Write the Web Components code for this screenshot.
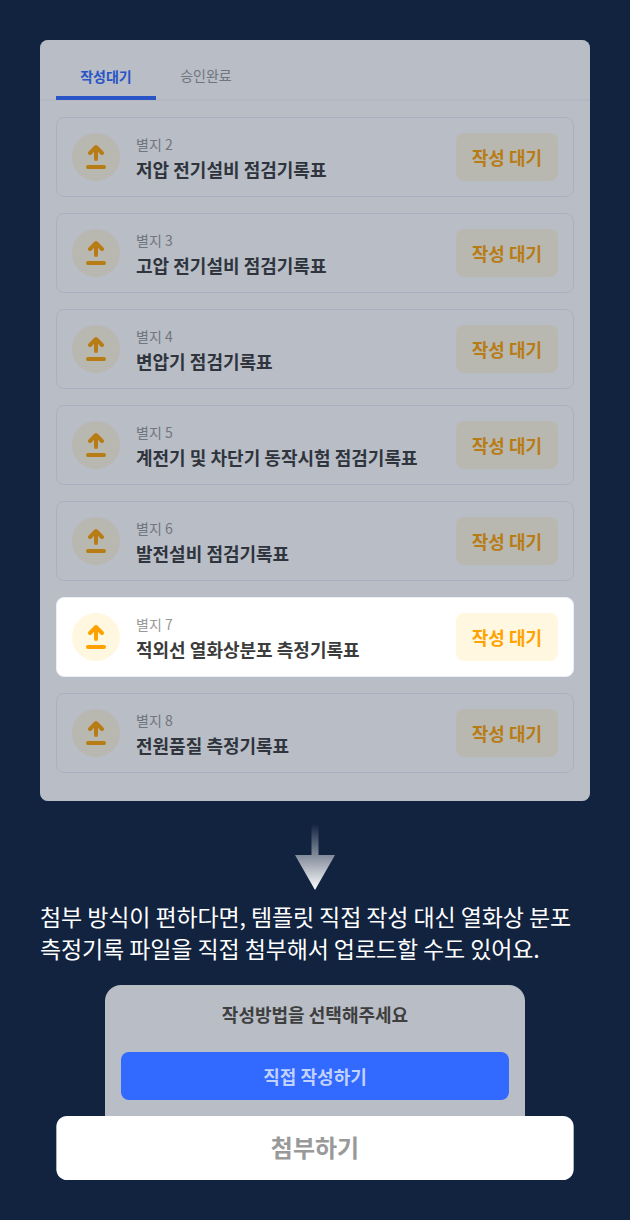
<!DOCTYPE html>
<html lang="ko">
<head>
<meta charset="utf-8">
<title>점검기록표</title>
<style>
  body {
    margin: 0;
    background: #122340;
    font-family: "Noto Sans CJK KR", "Noto Sans CJK JP", sans-serif;
  }
</style>
</head>
<body>
<guide-page>
  <list-panel>
    <tab-bar slot="tabs">
      <tab-item active>작성대기</tab-item>
      <tab-item>승인완료</tab-item>
    </tab-bar>
    <form-card no="별지 2">저압 전기설비 점검기록표</form-card>
    <form-card no="별지 3">고압 전기설비 점검기록표</form-card>
    <form-card no="별지 4">변압기 점검기록표</form-card>
    <form-card no="별지 5">계전기 및 차단기 동작시험 점검기록표</form-card>
    <form-card no="별지 6">발전설비 점검기록표</form-card>
    <form-card no="별지 7" active>적외선 열화상분포 측정기록표</form-card>
    <form-card no="별지 8">전원품질 측정기록표</form-card>
  </list-panel>
  <down-arrow></down-arrow>
  <guide-text>첨부 방식이 편하다면, 템플릿 직접 작성 대신 열화상 분포<br>측정기록 파일을 직접 첨부해서 업로드할 수도 있어요.</guide-text>
  <method-sheet>
    작성방법을 선택해주세요
    <span slot="action">직접 작성하기</span>
  </method-sheet>
  <attach-button>첨부하기</attach-button>
</guide-page>

<script>
const define = (name, html) => {
  customElements.define(name, class extends HTMLElement {
    constructor() {
      super();
      this.attachShadow({ mode: "open" });
      this.shadowRoot.innerHTML = html;
    }
  });
};

define("guide-page", `
<style>
  :host {
    display: flex;
    flex-direction: column;
    box-sizing: border-box;
    width: 630px;
    height: 1220px;
    padding: 40px;
  }
</style>
<slot></slot>
`);

define("list-panel", `
<style>
  :host {
    display: block;
    position: relative;
    isolation: isolate;
    box-sizing: border-box;
    height: 761px;
    flex: none;
    border-radius: 8px;
    background: #fff;
    overflow: hidden;
  }
  .list {
    display: flex;
    flex-direction: column;
    gap: 16px;
    padding: 16px;
  }
  /* dims everything but the active card */
  .dim {
    position: absolute;
    inset: 0;
    z-index: 1;
    background: rgb(21, 37, 67);
    opacity: 0.3;
  }
</style>
<slot name="tabs"></slot>
<div class="list"><slot></slot></div>
<div class="dim"></div>
`);

define("tab-bar", `
<style>
  :host {
    display: flex;
    box-sizing: border-box;
    height: 61px;
    padding: 0 16px;
    background: linear-gradient(#f8f8f9, #f8f8f9) left bottom / 100% 2px no-repeat;
  }
</style>
<slot></slot>
`);

define("tab-item", `
<style>
  :host {
    display: flex;
    justify-content: center;
    box-sizing: border-box;
    width: 100px;
    height: 60px;
    padding-top: 25px;
    color: #999;
    font-size: 14px;
    line-height: 20px;
  }
  :host([active]) {
    padding-top: 26px;
    border-bottom: 4px solid #3269ff;
    color: #3269ff;
    font-weight: 700;
  }
</style>
<slot></slot>
`);

define("upload-icon", `
<style>
  :host {
    display: flex;
    flex: none;
    width: 48px;
    height: 48px;
    border-radius: 50%;
    background: #fff7e0;
  }
</style>
<svg width="48" height="48" viewBox="0 0 48 48" fill="none" stroke="#ffa200" stroke-width="4" stroke-linecap="round" stroke-linejoin="round">
  <path d="M24 26V14M18 20L24 14L30 20M16 34H32"/>
</svg>
`);

customElements.define("form-card", class extends HTMLElement {
  constructor() {
    super();
    this.attachShadow({ mode: "open" });
    this.shadowRoot.innerHTML = `
<style>
  :host {
    display: flex;
    align-items: center;
    box-sizing: border-box;
    height: 80px;
    padding: 0 15px;
    border: 1px solid #ebedf8;
    border-radius: 8px;
    background: #fff;
  }
  :host([active]) {
    position: relative;
    z-index: 2;
  }
  .text {
    flex: 1;
    margin-left: 16px;
  }
  .no {
    padding-top: 1px;
    color: #999;
    font-size: 14px;
    line-height: 20px;
    word-spacing: -0.05em;
  }
  .name {
    margin-top: 2px;
    color: #3c3c3c;
    font-size: 18px;
    font-weight: 700;
    line-height: 26px;
    word-spacing: -0.05em;
  }
  .state {
    width: 102px;
    height: 48px;
    border-radius: 8px;
    background: #fff7e0;
    color: #ffa200;
    font-size: 18px;
    font-weight: 700;
    line-height: 48px;
    text-align: center;
    word-spacing: -0.05em;
  }
</style>
<upload-icon></upload-icon>
<div class="text">
  <div class="no"></div>
  <div class="name"><slot></slot></div>
</div>
<div class="state">작성 대기</div>
`;
  }

  connectedCallback() {
    this.shadowRoot.querySelector(".no").textContent = this.getAttribute("no");
  }
});

define("down-arrow", `
<style>
  :host {
    display: flex;
    justify-content: center;
    margin-top: 23px;
  }
</style>
<svg width="40" height="66" viewBox="0 0 40 66">
  <defs>
    <linearGradient id="fade" x1="0" y1="0" x2="0" y2="1">
      <stop offset="0" stop-color="#fff" stop-opacity="0"/>
      <stop offset="1" stop-color="#fff"/>
    </linearGradient>
  </defs>
  <path fill="url(#fade)" d="M16.5 0H23.5V31H40L20 66L0 31H16.5Z"/>
</svg>
`);

define("guide-text", `
<style>
  :host {
    display: block;
    margin-top: 10px;
    color: #fff;
    font-size: 23px;
    letter-spacing: -0.14px;
    line-height: 32px;
    white-space: nowrap;
    word-spacing: -0.05em;
  }
</style>
<slot></slot>
`);

define("method-sheet", `
<style>
  :host {
    display: block;
    box-sizing: border-box;
    width: 420px;
    height: 131px;
    flex: none;
    margin: 21px auto 0;
    padding: 16px 16px 0;
    border-radius: 16px 16px 0 0;
    background: #b8bdc6;
    color: #3f3f3f;
    font-size: 18px;
    font-weight: 700;
    line-height: 26px;
    text-align: center;
    word-spacing: -0.05em;
  }
  .action {
    height: 48px;
    margin-top: 25px;
    border-radius: 8px;
    background: #3269ff;
    color: #c1d2ff;
    line-height: 48px;
  }
</style>
<div><slot></slot></div>
<div class="action"><slot name="action"></slot></div>
`);

define("attach-button", `
<style>
  /* a sheet button, enlarged by a third */
  :host {
    display: block;
    width: 388px;
    height: 48px;
    flex: none;
    align-self: center;
    margin: 8px 0;
    border-radius: 8px;
    background: #fff;
    color: #999;
    font-size: 18px;
    font-weight: 700;
    line-height: 47px;
    text-align: center;
    transform: scale(1.3333);
  }
</style>
<slot></slot>
`);
</script>
</body>
</html>
